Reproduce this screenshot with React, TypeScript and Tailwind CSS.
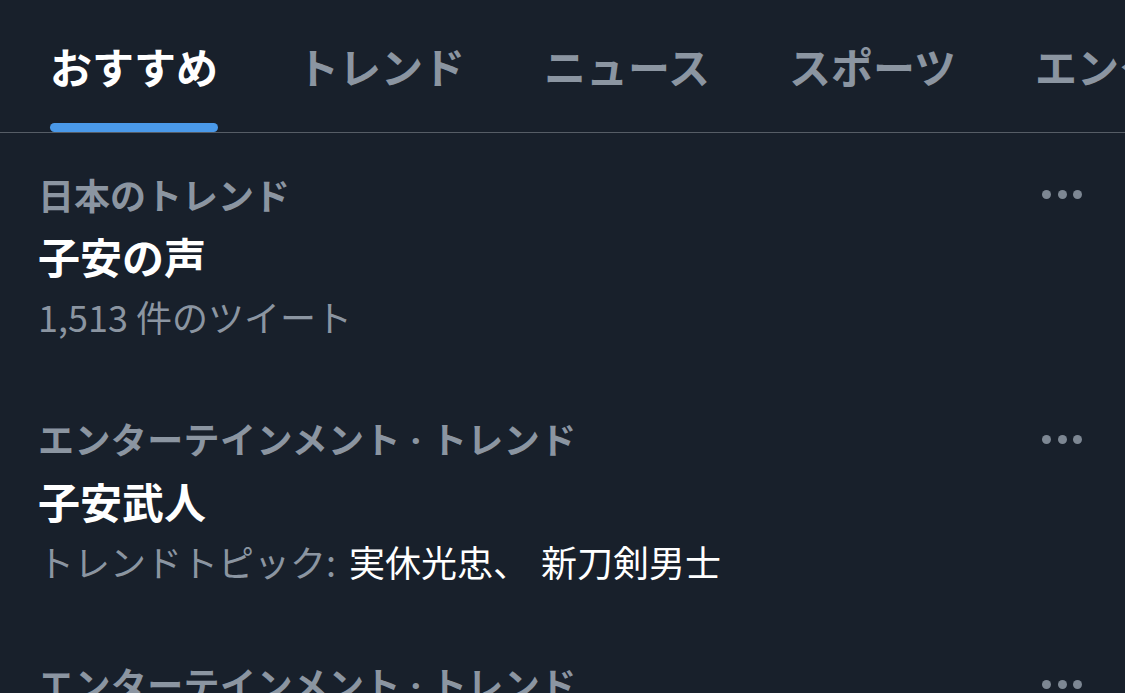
import React from "react";

const FONT = { fontFamily: '"Noto Sans CJK JP", "Noto Sans", sans-serif' };

function Dots() {
  return (
    <div className="flex items-center gap-[6.5px] pr-[43px]">
      <span className="block w-[9px] h-[9px] rounded-full bg-[#7d8793]" />
      <span className="block w-[9px] h-[9px] rounded-full bg-[#7d8793]" />
      <span className="block w-[9px] h-[9px] rounded-full bg-[#7d8793]" />
    </div>
  );
}

function Trend({ header, title, sub }: { header: React.ReactNode; title: string; sub: React.ReactNode }) {
  return (
    <div className="pt-[31px] pb-[31px] pl-[38px]">
      <div className="flex items-center justify-between h-[61px]">
        <span className="text-[36px] font-bold text-[#8b95a1] leading-[61px] whitespace-nowrap">{header}</span>
        <Dots />
      </div>
      <div className="h-[61px] text-[42px] font-bold text-white leading-[61px]">{title}</div>
      <div className="h-[61px] text-[36px] text-[#8b95a1] leading-[61px] whitespace-nowrap">{sub}</div>
    </div>
  );
}

function EntHeader() {
  return (
    <span className="tracking-[0.4px]">
      エンターテインメント
      <span style={{ fontFamily: '"Noto Sans", sans-serif' }}> · </span>
      トレンド
    </span>
  );
}

export default function App() {
  const tabs = ["おすすめ", "トレンド", "ニュース", "スポーツ", "エンターテインメント"];
  return (
    <div className="w-[1125px] h-[693px] overflow-hidden bg-[#18202b]" style={FONT}>
      <div className="flex gap-[79px] pl-[50px] h-[133px] border-b border-[#565d66] overflow-hidden whitespace-nowrap">
        {tabs.map((t, i) => (
          <div key={t} className="flex flex-col h-[132px] pt-[45px] shrink-0">
            <span
              className={
                "block h-[42px] leading-[42px] text-[42px] font-bold " +
                (i === 0 ? "text-white" : "text-[#8b95a1]")
              }
            >
              {t}
            </span>
            {i === 0 ? (
              <span className="block mt-auto h-[9px] rounded-full bg-[#4a99e9]" />
            ) : null}
          </div>
        ))}
      </div>
      <Trend header="日本のトレンド" title="子安の声" sub="1,513 件のツイート" />
      <Trend
        header={<EntHeader />}
        title="子安武人"
        sub={
          <>
            トレンドトピック:
            <span className="text-white ml-[13px]">
              実休光忠、<span className="ml-[12px]">新刀剣男士</span>
            </span>
          </>
        }
      />
      <Trend header={<EntHeader />} title="" sub="" />
    </div>
  );
}
